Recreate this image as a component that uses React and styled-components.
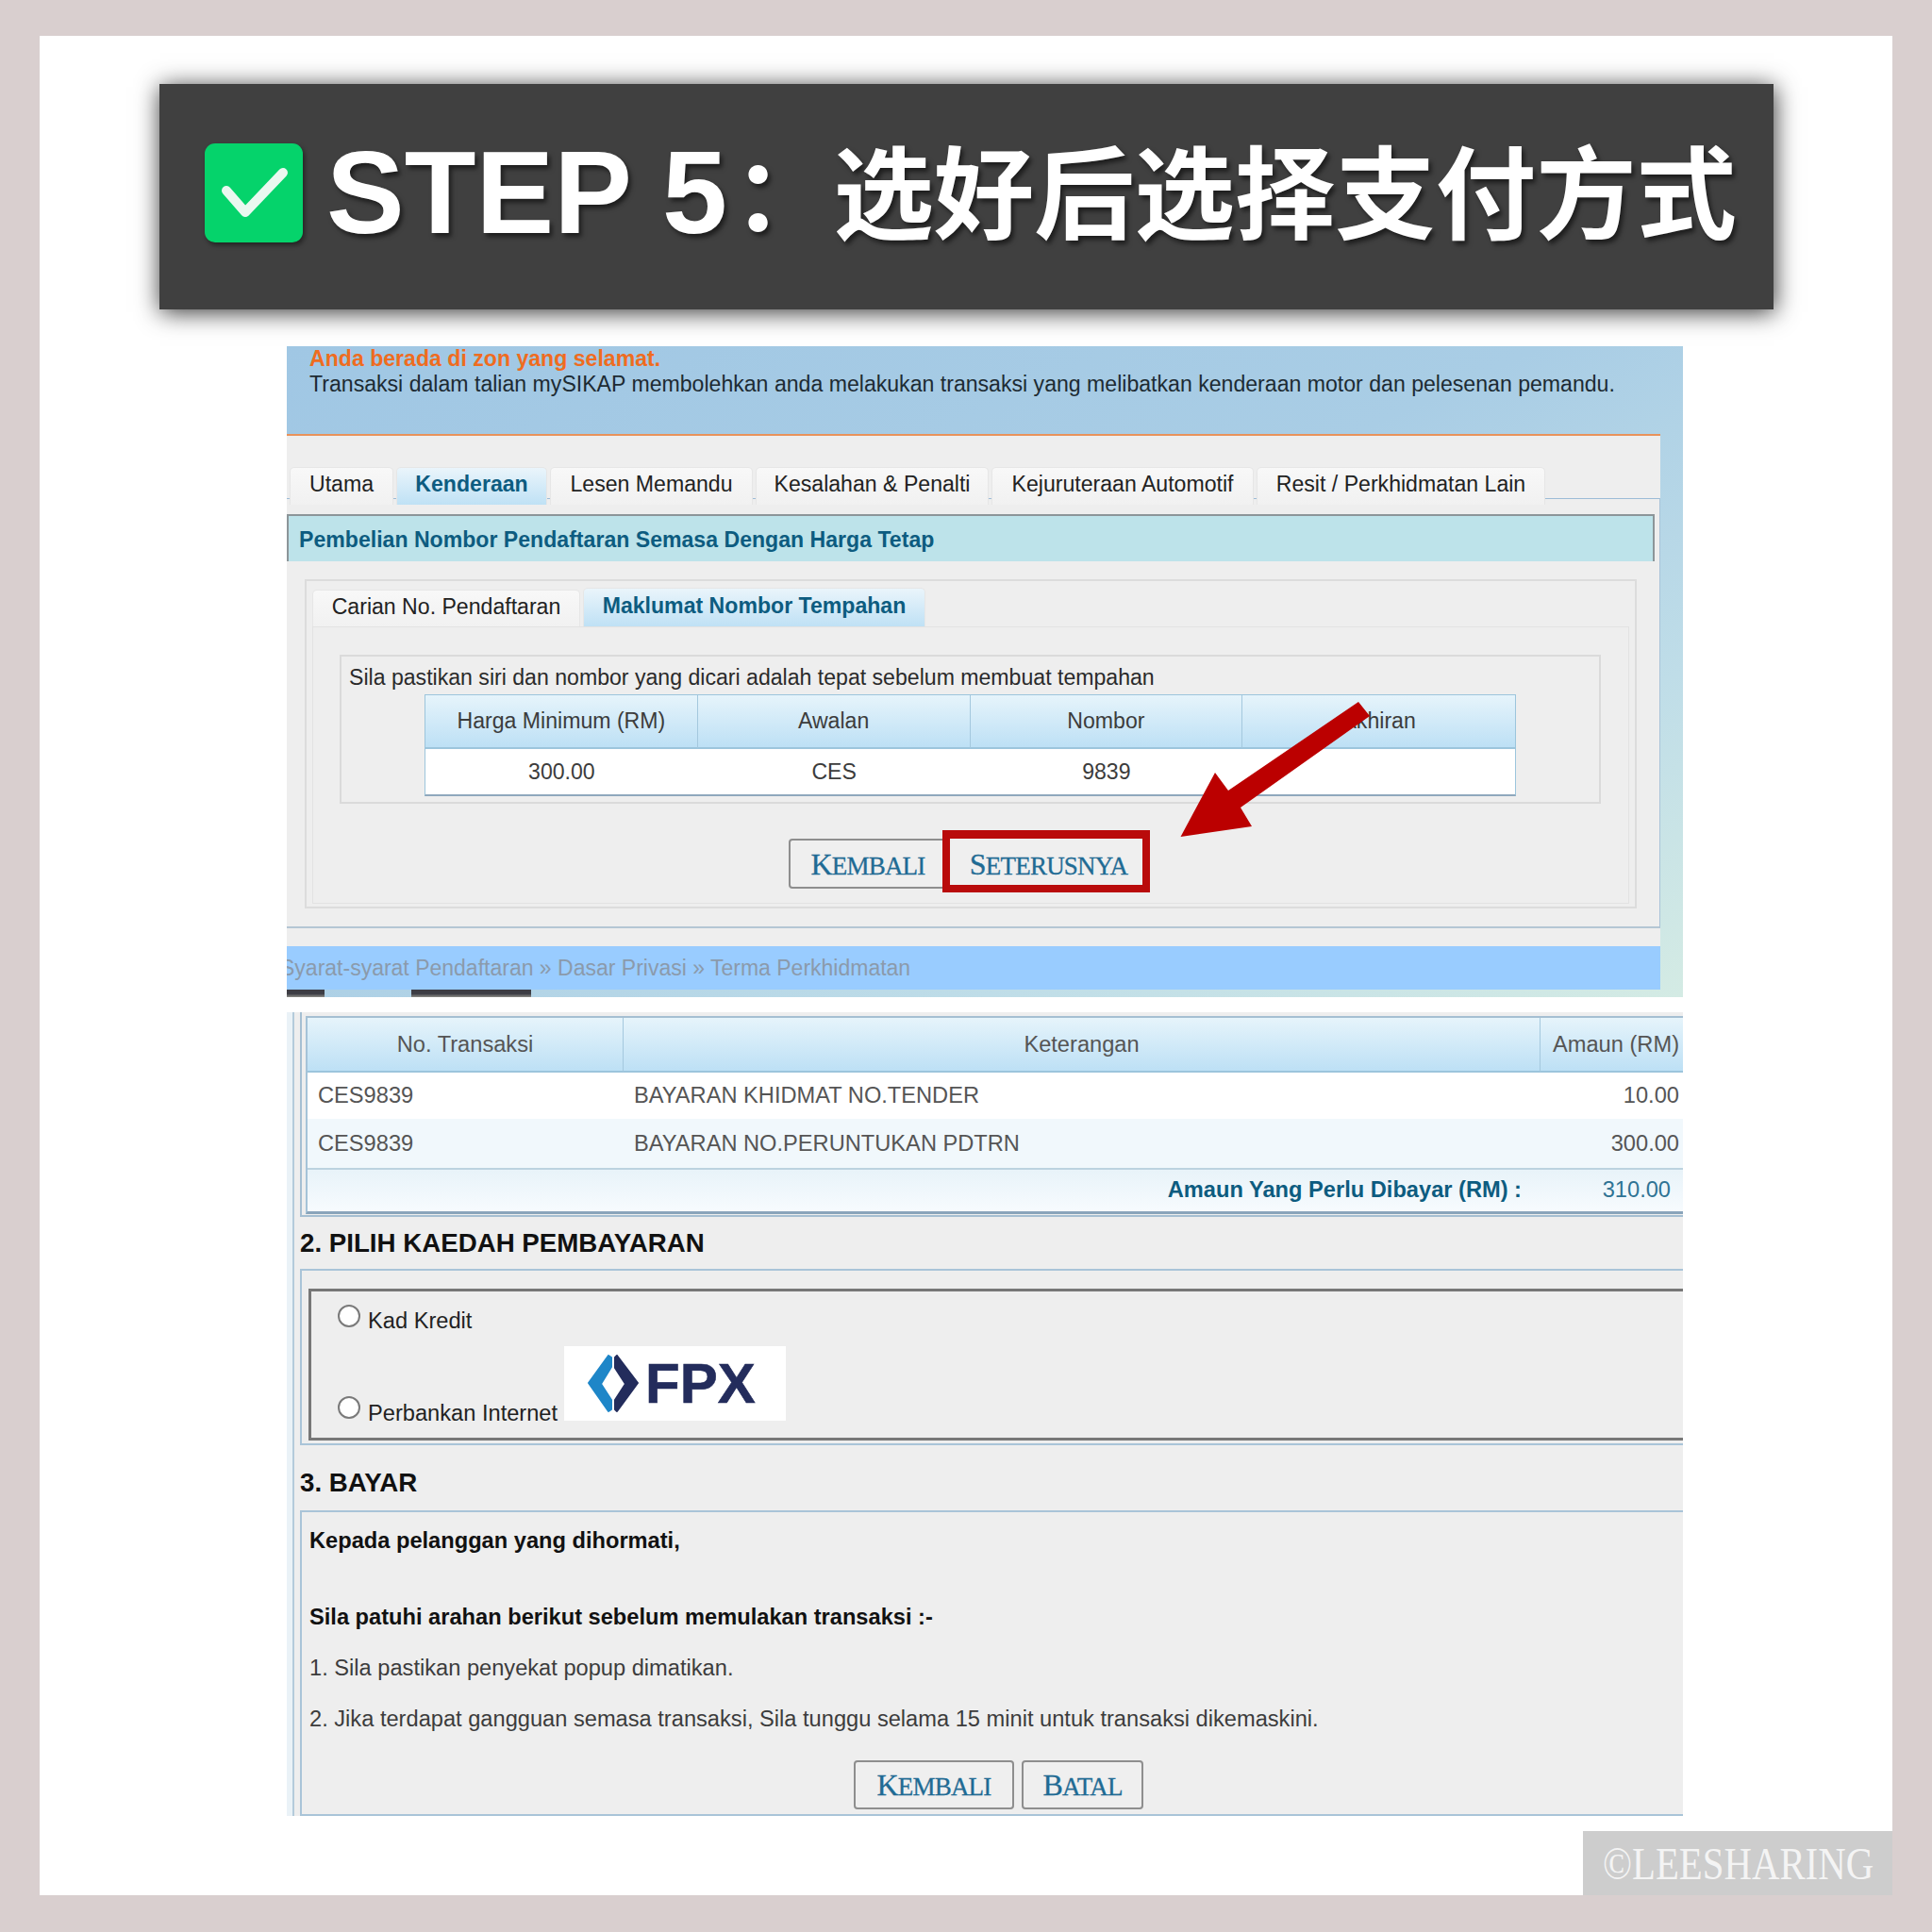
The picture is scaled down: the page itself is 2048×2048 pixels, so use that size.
import React from 'react';
import styled, { createGlobalStyle } from 'styled-components';

const GlobalStyle = createGlobalStyle`
    html, body {
        margin: 0;
        padding: 0;
        background: #d9cfcf;
    }
    * {
        box-sizing: border-box;
    }
`;

const SANS = '"Liberation Sans", Arial, sans-serif';
const CJK = '"Liberation Sans", "Noto Sans CJK SC", sans-serif';
const SERIF = '"Liberation Serif", "Times New Roman", serif';

const Page = styled.div`
    width: 2048px;
    height: 2048px;
    padding: 38px 42px 39px;
    background: #d9cfcf;
    font-family: ${SANS};
`;

const Sheet = styled.div`
    width: 1964px;
    height: 1971px;
    background: #fff;
    display: flex;
    flex-direction: column;
    align-items: flex-start;
`;

const Banner = styled.div`
    width: 1711px;
    height: 239px;
    margin: 51px 0 0 127px;
    padding: 0 0 9px 48px;
    display: flex;
    align-items: center;
    background: #404040;
    box-shadow: 1px 3px 24px rgba(0, 0, 0, 0.8);
    color: #fff;
    text-shadow: 3px 4px 5px rgba(0, 0, 0, 0.55);
`;

const CheckBadge = styled.div`
    width: 104px;
    height: 105px;
    flex: none;
    border-radius: 11px;
    background: #05d36b;
    box-shadow: 2px 3px 5px rgba(0, 0, 0, 0.45);

    svg {
        display: block;
    }
`;

const BannerTitle = styled.div`
    margin-left: 25px;
    display: flex;
    align-items: center;
    white-space: nowrap;
`;

const BannerStep = styled.span`
    font-family: ${SANS};
    font-weight: 700;
    font-size: 124px;
    line-height: 1;
`;

const BannerCjk = styled.span`
    margin: 10px 0 0 6px;
    font-family: ${CJK};
    font-weight: 700;
    font-size: 106.4px;
    line-height: 1;
`;

const ShotTop = styled.div`
    position: relative;
    width: 1480px;
    height: 690px;
    margin: 39px 0 0 262px;
    padding-right: 24px;
    background: linear-gradient(155deg, #a0c7e4 0%, #a9cde5 45%, #bfdde8 75%, #d4ebe4 100%);
`;

const Notice = styled.div`
    height: 93px;
    padding-left: 24px;
    font-size: 23.1px;
    line-height: 27px;
    color: #1d2b33;
`;

const NoticeTitle = styled.div`
    color: #ef6c1f;
    font-weight: 700;
`;

const Panel = styled.div`
    height: 543px;
    padding-top: 33px;
    background: #eeeeee;
    border-top: 2px solid #e8925a;
`;

const TabRow = styled.div`
    position: relative;
    z-index: 1;
    display: flex;
    align-items: flex-end;
    gap: 3px;
    padding-left: ${p => p.$inset || 0}px;
    height: ${p => p.$height}px;
    margin-bottom: ${p => p.$overlap || 0}px;
`;

const Tab = styled.div`
    height: ${p => p.$height}px;
    width: ${p => p.$width}px;
    padding-bottom: 4px;
    display: flex;
    align-items: center;
    justify-content: center;
    font-size: 23.1px;
    white-space: nowrap;
    border-radius: 5px 5px 0 0;
    border: 1px solid #e6e6e6;
    border-bottom: none;
    color: ${p => (p.$active ? '#0d5c80' : '#222')};
    font-weight: ${p => (p.$active ? 700 : 400)};
    background: ${p => (p.$active
        ? 'linear-gradient(#eaf5fb, #bfe1f5)'
        : 'linear-gradient(#f8f8f8, #f1f1f1)')};
`;

const TabBody = styled.div`
    height: 456px;
    padding-top: 16px;
    border-top: 1px solid #9dbcd6;
    border-right: 1px solid #a9c3d8;
    border-bottom: 2px solid #b4c6d4;
`;

const TitleBar = styled.div`
    width: 1450px;
    height: 50px;
    padding: 2px 0 0 11px;
    display: flex;
    align-items: center;
    background: #bde3ea;
    border: 2px solid #8c9599;
    border-bottom: none;
    font-size: 23.1px;
    font-weight: 700;
    color: #0d5c80;
`;

const SearchBox = styled.div`
    width: 1412px;
    height: 349px;
    margin: 19px 0 0 19px;
    padding: 7px 6px 0;
    border: 2px solid #dcdcdc;
`;

const SearchBody = styled.div`
    height: 294px;
    padding: 29px 29px 0 28px;
    border: 1px solid #e2e2e2;
`;

const InfoBox = styled.div`
    height: 158px;
    padding: 5px 0 0 8px;
    border: 2px solid #dadada;
`;

const InfoText = styled.div`
    font-size: 23.1px;
    line-height: 35px;
    color: #2a2a2a;
`;

const PlateTable = styled.table`
    width: 1157px;
    margin-left: 80px;
    border-collapse: separate;
    border-spacing: 0;
    table-layout: fixed;
    font-size: 23.1px;
    color: #3c3c3c;
    border: 1px solid #9cc5dc;
    border-bottom: 2px solid #8fa8bd;
`;

const HeadCell = styled.th`
    height: ${p => p.$height || 57}px;
    padding: 0 ${p => (p.$right ? '6px' : '0')} 0 0;
    font-weight: 400;
    text-align: ${p => (p.$right ? 'right' : 'center')};
    white-space: nowrap;
    background: linear-gradient(#e6f4fb, #bde0f5);
    border-right: 1px solid #a4c8de;
    border-bottom: 2px solid #9cc5dc;

    &:last-child {
        border-right: none;
    }
`;

const PlateCell = styled.td`
    height: 48px;
    padding: 0;
    text-align: center;
    background: #fff;
`;

const ButtonRow = styled.div`
    display: flex;
    gap: ${p => p.$gap}px;
    padding-left: ${p => p.$inset}px;
    margin-top: ${p => p.$top}px;
`;

const PageButton = styled.button`
    position: relative;
    width: ${p => p.$width}px;
    height: ${p => p.$height}px;
    padding: 0;
    background: #efefef;
    border: 2px solid ${p => (p.$marked ? 'transparent' : '#8e8e8e')};
    border-radius: 4px;
    font-family: ${SERIF};
    font-size: 27px;
    line-height: 1;
    letter-spacing: -0.8px;
    text-transform: uppercase;
    -webkit-text-stroke: 0.3px #1f6b94;
    color: #1f6b94;
`;

const ButtonLabel = styled.span`
    display: inline-block;

    &::first-letter {
        font-size: 32px;
    }
`;

// red marker drawn over the next button
const Highlight = styled.span`
    position: absolute;
    top: -11px;
    left: -11px;
    right: -6px;
    bottom: -6px;
    border: 8px solid #b90b0b;
    border-top-width: 9px;
`;

const ArrowMark = styled.svg`
    position: absolute;
    left: 947px;
    top: 377px;
`;

const FooterBar = styled.div`
    width: 1456px;
    height: 46px;
    display: flex;
    align-items: center;
    overflow: hidden;
    background: #99ccff;
    font-size: 23px;
    color: #8b9aab;
    white-space: nowrap;
`;

const FooterText = styled.span`
    margin-left: -7px;
`;

const PhotoStrip = styled.div`
    height: 8px;
    display: flex;
`;

const PhotoPiece = styled.span`
    width: ${p => p.$width}px;
    margin-left: ${p => p.$offset}px;
    background: linear-gradient(#3d3d44 55%, #8c8c86);
`;

const ShotBottom = styled.div`
    width: 1480px;
    height: 852px;
    margin: 16px 0 0 262px;
    overflow: hidden;
    background: #eeeeee;
    border-left: 6px solid #eaf2f7;
`;

const ShotInner = styled.div`
    width: 1500px;
    height: 852px;
    padding-left: 6px;
    border-left: 2px solid #b4cbdb;
`;

const SummaryBox = styled.div`
    height: 217px;
    padding: 4px 0 0 4px;
    border-left: 2px solid #a5bfd2;
    border-bottom: 2px solid #a5bfd2;
`;

const SummaryTable = styled.table`
    width: 1460px;
    border-collapse: separate;
    border-spacing: 0;
    table-layout: fixed;
    font-size: 23.65px;
    color: #555;
    border-top: 2px solid #a5bfd2;
    border-left: 2px solid #a5c3d8;
    border-bottom: 3px solid #8aa5bb;
`;

const SummaryCell = styled.td`
    height: ${p => p.$height}px;
    padding: 0 6px 0 ${p => (p.$right ? '0' : '11px')};
    text-align: ${p => (p.$right ? 'right' : 'left')};
    background: ${p => (p.$even ? '#f1f8fc' : '#fff')};
    white-space: nowrap;
`;

const TotalLabel = styled.td`
    height: 46px;
    padding: 0 20px 2px 0;
    text-align: right;
    font-weight: 700;
    color: #0d5c80;
    border-top: 2px solid #bcd3e0;
    background: linear-gradient(#e8f3f9, #f7fbfe);
`;

const TotalValue = styled.td`
    padding: 0 15px 2px 0;
    text-align: right;
    color: #2f7394;
    border-top: 2px solid #bcd3e0;
    background: linear-gradient(#e8f3f9, #f7fbfe);
`;

const SectionHeading = styled.div`
    height: ${p => p.$height}px;
    padding-top: ${p => p.$top || 0}px;
    display: flex;
    align-items: center;
    font-size: 27.7px;
    font-weight: 700;
    color: #111;
`;

const SectionBox = styled.div`
    height: ${p => p.$height}px;
    padding: ${p => p.$pad};
    border: 2px solid #a9c4d8;
    border-right: none;
`;

const MethodSet = styled.div`
    height: 161px;
    padding: 14px 0 0 28px;
    border: 3px solid #777;
    border-right: none;
`;

const MethodRow = styled.label`
    display: flex;
    align-items: flex-start;
    height: ${p => p.$height}px;
    font-size: 23.65px;
    color: #222;
`;

const Radio = styled.input.attrs({ type: 'radio', name: 'kaedah' })`
    appearance: none;
    flex: none;
    width: 24px;
    height: 24px;
    margin: ${p => p.$top}px 8px 0 0;
    background: #fff;
    border: 2px solid #7a7a7a;
    border-radius: 50%;
`;

const MethodLabel = styled.span`
    line-height: 30px;
    margin-top: ${p => p.$top}px;
`;

const FpxLogo = styled.div`
    width: 235px;
    height: 79px;
    margin-left: 7px;
    padding-left: 24px;
    display: flex;
    align-items: center;
    gap: 6px;
    align-self: flex-start;
    background: #fff;

    svg {
        flex: none;
    }
`;

const FpxText = styled.span`
    font-size: 60px;
    font-weight: 700;
    line-height: 1;
    -webkit-text-stroke: 0.6px #232c5c;
    color: #232c5c;
`;

const Para = styled.p`
    margin: ${p => p.$top}px 0 0;
    font-size: 23.65px;
    line-height: 30px;
    color: ${p => (p.$strong ? '#111' : '#3c3c3c')};
    font-weight: ${p => (p.$strong ? 700 : 400)};
`;

const Watermark = styled.div`
    align-self: flex-end;
    width: 328px;
    height: 68px;
    margin-top: 16px;
    padding-left: 21px;
    display: flex;
    align-items: center;
    background: #cdcdcd;
    font-family: ${SERIF};
    font-size: 48px;
    color: rgba(255, 255, 255, 0.8);
    white-space: nowrap;
`;

const WatermarkText = styled.span`
    transform: scaleX(0.85);
    transform-origin: left center;
`;

const TABS = [
    { label: 'Utama', width: 110 },
    { label: 'Kenderaan', width: 160, active: true },
    { label: 'Lesen Memandu', width: 215 },
    { label: 'Kesalahan & Penalti', width: 247 },
    { label: 'Kejuruteraan Automotif', width: 278 },
    { label: 'Resit / Perkhidmatan Lain', width: 306 },
];

const App = () => (
    <Page>
        <GlobalStyle />
        <Sheet>
            <Banner>
                <CheckBadge>
                    <svg width="104" height="105" viewBox="0 0 104 105">
                        <polyline points="23,50 43,73 83,31" fill="none" stroke="#eaf8f0" strokeWidth="10" strokeLinecap="round" strokeLinejoin="round" />
                    </svg>
                </CheckBadge>
                <BannerTitle>
                    <BannerStep>STEP 5</BannerStep>
                    <BannerCjk>：选好后选择支付方式</BannerCjk>
                </BannerTitle>
            </Banner>

            <ShotTop>
                <Notice>
                    <NoticeTitle>Anda berada di zon yang selamat.</NoticeTitle>
                    Transaksi dalam talian mySIKAP membolehkan anda melakukan transaksi yang melibatkan kenderaan motor dan pelesenan pemandu.
                </Notice>
                <Panel>
                    <TabRow $inset={3} $height={40} $overlap={-7}>
                        {TABS.map(tab => (
                            <Tab key={tab.label} $width={tab.width} $height={40} $active={tab.active}>{tab.label}</Tab>
                        ))}
                    </TabRow>
                    <TabBody>
                        <TitleBar>Pembelian Nombor Pendaftaran Semasa Dengan Harga Tetap</TitleBar>
                        <SearchBox>
                            <TabRow $height={41}>
                                <Tab $width={284} $height={39}>Carian No. Pendaftaran</Tab>
                                <Tab $width={363} $height={41} $active>Maklumat Nombor Tempahan</Tab>
                            </TabRow>
                            <SearchBody>
                                <InfoBox>
                                    <InfoText>Sila pastikan siri dan nombor yang dicari adalah tepat sebelum membuat tempahan</InfoText>
                                    <PlateTable>
                                        <thead>
                                            <tr>
                                                <HeadCell>Harga Minimum (RM)</HeadCell>
                                                <HeadCell>Awalan</HeadCell>
                                                <HeadCell>Nombor</HeadCell>
                                                <HeadCell>Akhiran</HeadCell>
                                            </tr>
                                        </thead>
                                        <tbody>
                                            <tr>
                                                <PlateCell>300.00</PlateCell>
                                                <PlateCell>CES</PlateCell>
                                                <PlateCell>9839</PlateCell>
                                                <PlateCell />
                                            </tr>
                                        </tbody>
                                    </PlateTable>
                                </InfoBox>
                                <ButtonRow $gap={4} $inset={476} $top={37}>
                                    <PageButton $width={168} $height={53}><ButtonLabel>Kembali</ButtonLabel></PageButton>
                                    <PageButton $width={207} $height={53} $marked>
                                        <ButtonLabel>Seterusnya</ButtonLabel>
                                        <Highlight />
                                    </PageButton>
                                </ButtonRow>
                            </SearchBody>
                        </SearchBox>
                    </TabBody>
                </Panel>
                <FooterBar>
                    <FooterText>Syarat-syarat Pendaftaran » Dasar Privasi » Terma Perkhidmatan</FooterText>
                </FooterBar>
                <PhotoStrip>
                    <PhotoPiece $offset={0} $width={40} />
                    <PhotoPiece $offset={92} $width={127} />
                </PhotoStrip>
                <ArrowMark width="202" height="143" viewBox="0 0 202 143">
                    <polygon points="0.5,143 37,75 51,94 189,0 201,15 64,112 76,132" fill="#bb0000" />
                </ArrowMark>
            </ShotTop>

            <ShotBottom>
                <ShotInner>
                    <SummaryBox>
                        <SummaryTable>
                            <colgroup>
                                <col width="335" />
                                <col width="972" />
                                <col width="153" />
                            </colgroup>
                            <thead>
                                <tr>
                                    <HeadCell $height={58}>No. Transaksi</HeadCell>
                                    <HeadCell $height={58}>Keterangan</HeadCell>
                                    <HeadCell $height={58} $right>Amaun (RM)</HeadCell>
                                </tr>
                            </thead>
                            <tbody>
                                <tr>
                                    <SummaryCell $height={49}>CES9839</SummaryCell>
                                    <SummaryCell $height={49}>BAYARAN KHIDMAT NO.TENDER</SummaryCell>
                                    <SummaryCell $height={49} $right>10.00</SummaryCell>
                                </tr>
                                <tr>
                                    <SummaryCell $height={52} $even>CES9839</SummaryCell>
                                    <SummaryCell $height={52} $even>BAYARAN NO.PERUNTUKAN PDTRN</SummaryCell>
                                    <SummaryCell $height={52} $even $right>300.00</SummaryCell>
                                </tr>
                                <tr>
                                    <TotalLabel colSpan={2}>Amaun Yang Perlu Dibayar (RM) :</TotalLabel>
                                    <TotalValue>310.00</TotalValue>
                                </tr>
                            </tbody>
                        </SummaryTable>
                    </SummaryBox>

                    <SectionHeading $height={55}>2. PILIH KAEDAH PEMBAYARAN</SectionHeading>
                    <SectionBox $height={187} $pad="19px 0 0 7px">
                        <MethodSet>
                            <MethodRow $height={44}>
                                <Radio $top={0} />
                                <MethodLabel $top={2}>Kad Kredit</MethodLabel>
                            </MethodRow>
                            <MethodRow $height={79}>
                                <Radio $top={53} />
                                <MethodLabel $top={56}>Perbankan Internet</MethodLabel>
                                <FpxLogo>
                                    <svg width="56" height="62" viewBox="-1 -1 56 62">
                                        <polygon points="22,0 1,29 22,59 25,57 25,47 14,30 25,12 25,2" fill="#1e86c8" stroke="#1e86c8" strokeWidth="2" strokeLinejoin="round" />
                                        <polygon points="31,0 53,29 31,59 29,57 29,47 40,30 29,13 29,2" fill="#232c5c" stroke="#232c5c" strokeWidth="2" strokeLinejoin="round" />
                                    </svg>
                                    <FpxText>FPX</FpxText>
                                </FpxLogo>
                            </MethodRow>
                        </MethodSet>
                    </SectionBox>

                    <SectionHeading $height={69} $top={10}>3. BAYAR</SectionHeading>
                    <SectionBox $height={324} $pad="15px 0 0 8px">
                        <Para $top={0} $strong>Kepada pelanggan yang dihormati,</Para>
                        <Para $top={51} $strong>Sila patuhi arahan berikut sebelum memulakan transaksi :-</Para>
                        <Para $top={24}>1. Sila pastikan penyekat popup dimatikan.</Para>
                        <Para $top={24}>2. Jika terdapat gangguan semasa transaksi, Sila tunggu selama 15 minit untuk transaksi dikemaskini.</Para>
                        <ButtonRow $gap={8} $inset={577} $top={29}>
                            <PageButton $width={170} $height={52}><ButtonLabel>Kembali</ButtonLabel></PageButton>
                            <PageButton $width={129} $height={52}><ButtonLabel>Batal</ButtonLabel></PageButton>
                        </ButtonRow>
                    </SectionBox>
                </ShotInner>
            </ShotBottom>

            <Watermark><WatermarkText>©LEESHARING</WatermarkText></Watermark>
        </Sheet>
    </Page>
);

export default App;
